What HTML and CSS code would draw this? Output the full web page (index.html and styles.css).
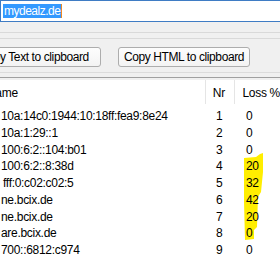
FILE: index.html
```html
<!DOCTYPE html>
<html>
<head>
<meta charset="utf-8">
<link rel="stylesheet" href="styles.css">
</head>
<body>
<div class="window">
  <div class="urlbar"><span class="sel">mydealz.de</span><span class="caret"></span></div>
  <div class="rule rule-a"></div>
  <div class="rule rule-b"></div>
  <div class="buttons">
    <button class="btn btn-text">Copy Text to clipboard</button>
    <button class="btn btn-html">Copy HTML to clipboard</button>
  </div>
  <div class="rule rule-c"></div>
  <div class="rule rule-d"></div>
  <div class="list">
    <svg class="marker" width="280" height="182" viewBox="0 0 280 182">
      <polygon fill="#ffee00" points="244,78 256,77 260,74 263,73 263,92 262,102 261,112 258,117 257,147 254,150 254,159 245,160 244,122"/>
    </svg>
    <div class="head">
      <div class="col-name"><span class="hname">Name</span></div>
      <div class="col-nr">Nr</div>
      <div class="col-loss">Loss %</div>
    </div>
    <div class="rows">
      <div class="row"><div class="col-name">10a:14c0:1944:10:18ff:fea9:8e24</div><div class="col-nr">1</div><div class="col-loss">0</div></div>
      <div class="row"><div class="col-name">10a:1:29::1</div><div class="col-nr">2</div><div class="col-loss">0</div></div>
      <div class="row"><div class="col-name">100:6:2::104:b01</div><div class="col-nr">3</div><div class="col-loss">0</div></div>
      <div class="row"><div class="col-name">100:6:2::8:38d</div><div class="col-nr">4</div><div class="col-loss">20</div></div>
      <div class="row"><div class="col-name ind">fff:0:c02:c02:5</div><div class="col-nr">5</div><div class="col-loss">32</div></div>
      <div class="row"><div class="col-name">ne.bcix.de</div><div class="col-nr">6</div><div class="col-loss">42</div></div>
      <div class="row"><div class="col-name">ne.bcix.de</div><div class="col-nr">7</div><div class="col-loss">20</div></div>
      <div class="row"><div class="col-name">are.bcix.de</div><div class="col-nr">8</div><div class="col-loss">0</div></div>
      <div class="row"><div class="col-name">700::6812:c974</div><div class="col-nr">9</div><div class="col-loss">0</div></div>
    </div>
  </div>
</div>
</body>
</html>
```

FILE: styles.css
```css
html, body {
  margin: 0;
  padding: 0;
}
body {
  width: 280px;
  height: 260px;
  overflow: hidden;
  background: #f0f0f0;
  font-family: "Liberation Sans", Arial, sans-serif;
  font-size: 12px;
  color: #000;
}
.window {
  width: 280px;
}
.urlbar {
  box-sizing: border-box;
  width: 320px;
  height: 22px;
  border: 1px solid #3f7cc4;
  background: #fff;
  display: flex;
  align-items: center;
  padding-left: 2px;
}
.sel {
  display: inline-block;
  height: 14px;
  line-height: 14px;
  padding: 0 1px;
  background: #3399ff;
  color: #fff;
  letter-spacing: -0.5px;
}
.caret {
  display: inline-block;
  width: 1px;
  height: 14px;
  background: #f08a24;
}
.rule {
  height: 1px;
  background: #d9d9d9;
}
.rule-a { margin-top: 10px; }
.rule-b { margin-top: 5px; }
.buttons {
  display: flex;
  gap: 17px;
  margin-top: 8px;
  margin-left: -33px;
}
.btn {
  box-sizing: border-box;
  height: 20px;
  padding: 0;
  border: 1px solid #adadad;
  border-radius: 3px;
  background: linear-gradient(#fdfdfd, #f3f3f3);
  font: inherit;
  line-height: 18px;
  letter-spacing: -0.4px;
  white-space: nowrap;
  color: #000;
  text-align: center;
}
.btn-text { width: 134px; }
.btn-html { width: 132px; }
.rule-c { margin-top: 5px; background: #dcdcdc; }
.rule-d { margin-top: 4px; background: #a0a0a0; }
.list {
  position: relative;
  z-index: 0;
  background: #fff;
  height: 182px;
  line-height: 16.75px;
  letter-spacing: -0.3px;
}
.marker {
  position: absolute;
  left: 0;
  top: 0;
  z-index: -1;
}
.head {
  display: flex;
  margin-top: 2px;
  height: 24px;
}
.head > div {
  box-sizing: border-box;
  padding-top: 5px;
  white-space: nowrap;
}
.head .col-name, .head .col-nr {
  border-right: 1px solid #e5e5e5;
}
.hname {
  display: inline-block;
  margin-left: -14px;
}
.rows {
  margin-top: 4px;
}
.row {
  display: flex;
  height: 16.75px;
}
.col-name {
  box-sizing: border-box;
  width: 209px;
  padding-left: 1px;
  white-space: nowrap;
  overflow: hidden;
}
.row .col-name.ind { padding-left: 3px; }
.col-nr {
  box-sizing: border-box;
  width: 30px;
  padding-left: 7px;
}
.col-loss {
  box-sizing: border-box;
  flex: 1;
  padding-left: 7px;
  white-space: nowrap;
}
```
